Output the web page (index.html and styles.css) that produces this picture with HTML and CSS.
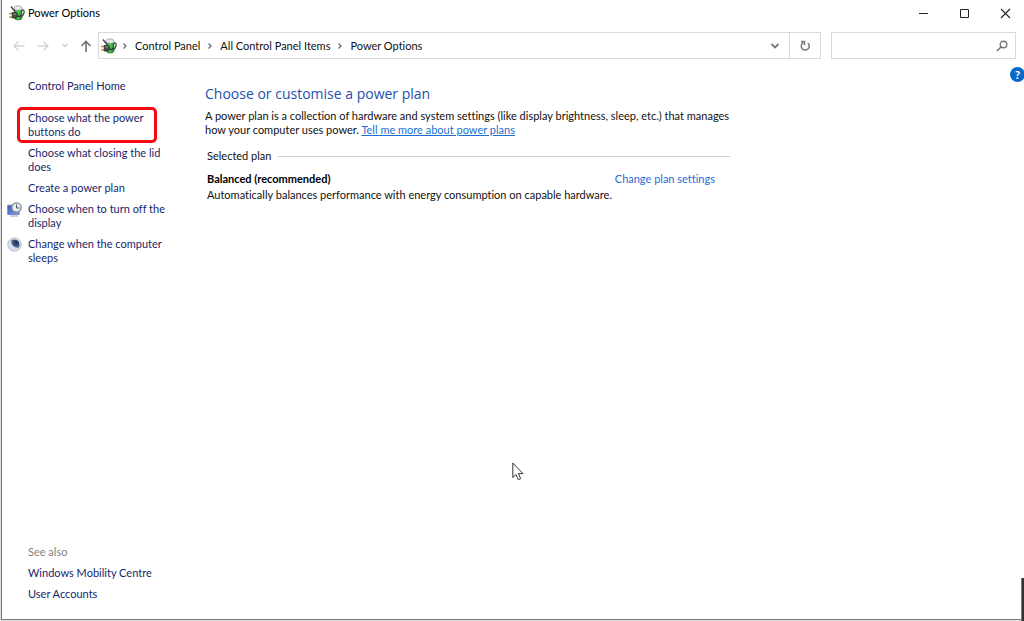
FILE: index.html
```html
<!DOCTYPE html>
<html lang="en-GB">
<head>
<meta charset="utf-8">
<title>Power Options</title>
<link rel="stylesheet" href="styles.css">
</head>
<body>
<svg class="defs" width="0" height="0" aria-hidden="true">
  <defs>
    <linearGradient id="green" x1="0" y1="0" x2="1" y2="0">
      <stop offset="0" stop-color="#1d7a25"/><stop offset="0.5" stop-color="#4fd04f"/><stop offset="1" stop-color="#17802a"/>
    </linearGradient>
    <linearGradient id="blue" x1="0" y1="0" x2="1" y2="1">
      <stop offset="0" stop-color="#3a50b8"/><stop offset="1" stop-color="#86a4ee"/>
    </linearGradient>
    <radialGradient id="moon" cx="0.65" cy="0.35" r="0.7">
      <stop offset="0" stop-color="#1c2c4c"/><stop offset="0.6" stop-color="#40567e"/><stop offset="1" stop-color="#8fa9cc"/>
    </radialGradient>
    <symbol id="power" viewBox="0 0 16 16">
      <path d="M12.500 5.500C15 4.200 15.600 6 14.800 8.500S13.500 11 12 12" fill="none" stroke="#3c443c" stroke-width="1.200"/>
      <path d="M5.500 3.500h7.500V13q-.3 2-3.700 2t-3.800-2z" fill="url(#green)" stroke="#24562a" stroke-width=".6"/>
      <path d="M5 4.500V3Q5.300.8 9 .8t4 2.200v1.500Q9 6.500 5 4.500z" fill="#e3eaed" stroke="#8b9695" stroke-width=".7"/>
      <path d="M2 1.500L5.500 6" stroke="#3d4343" stroke-width="1.300"/>
      <path d="M0 8.500h4M0 12h4" stroke="#c99a2c" stroke-width="1.400"/>
      <path d="M3.200 7.500H6.500q2 .5 2.500 2.500-.5 2.500-2.500 3H3.200z" fill="#4a4d4d" stroke="#1f2323" stroke-width=".7"/>
      <path d="M4.500 9h2.500" stroke="#9ba1a1"/>
      <path d="M9 11q2 1.500 3-1" fill="none" stroke="#242a26" stroke-width="1.200"/>
    </symbol>
    <symbol id="chevron" viewBox="0 0 6 8">
      <path d="M1.500 1.500L4 4 1.500 6.500" fill="none" stroke="#6a6a6a" stroke-width="1.300"/>
    </symbol>
  </defs>
</svg>
<div class="desktop">
  <div class="window">
    <header class="titlebar">
      <svg class="app-icon" aria-hidden="true"><use href="#power"/></svg>
      <span class="title">Power Options</span>
      <button class="caption" aria-label="Minimise"><svg width="11" height="11" viewBox="0 0 11 11"><path d="M1 5.500h9" stroke="#222"/></svg></button>
      <button class="caption" aria-label="Maximise"><svg width="11" height="11" viewBox="0 0 11 11"><path d="M1.500 1.500h8v8h-8z" fill="none" stroke="#222"/></svg></button>
      <button class="caption" aria-label="Close"><svg width="11" height="11" viewBox="0 0 11 11"><path d="M1 1l9 9M10 1l-9 9" stroke="#222" stroke-width="1.100"/></svg></button>
    </header>

    <div class="navbar">
      <div class="history">
        <button aria-label="Back"><svg width="12" height="12" viewBox="0 0 12 12"><path d="M11.500 6H1M5.500 1.500L1 6l4.500 4.500" fill="none" stroke="#d4d4d4" stroke-width="1.300"/></svg></button>
        <button aria-label="Forward"><svg width="12" height="12" viewBox="0 0 12 12"><path d="M.5 6H11M6.500 1.500L11 6l-4.500 4.500" fill="none" stroke="#d4d4d4" stroke-width="1.300"/></svg></button>
        <button aria-label="Recent locations"><svg width="6" height="12" viewBox="0 0 6 12"><path d="M.5 4L3 6.500 5.500 4" fill="none" stroke="#d0d0d0" stroke-width="1.300"/></svg></button>
        <button aria-label="Up"><svg width="12" height="12" viewBox="0 0 12 12"><path d="M6 12V1.500M1.500 6L6 1.500 10.500 6" fill="none" stroke="#707070" stroke-width="1.600"/></svg></button>
      </div>
      <nav class="address" aria-label="Address">
        <svg class="app-icon" aria-hidden="true"><use href="#power"/></svg>
        <svg class="chevron" aria-hidden="true"><use href="#chevron"/></svg>
        <a href="#">Control Panel</a>
        <svg class="chevron" aria-hidden="true"><use href="#chevron"/></svg>
        <a href="#">All Control Panel Items</a>
        <svg class="chevron" aria-hidden="true"><use href="#chevron"/></svg>
        <a href="#">Power Options</a>
        <button class="drop" aria-label="Previous locations"><svg width="10" height="8" viewBox="0 0 10 8"><path d="M1.500 2L5 5.500 8.500 2" fill="none" stroke="#777" stroke-width="1.800"/></svg></button>
        <button class="refresh" aria-label="Refresh"><svg width="12" height="12" viewBox="0 0 12 12"><path d="M8.800 3A4 4 0 1 1 4.500 2.500" fill="none" stroke="#777" stroke-width="1.500"/><path d="M2 1.500h3.500V5" fill="none" stroke="#777" stroke-width="1.400"/></svg></button>
      </nav>
      <label class="search">
        <input type="text" aria-label="Search Control Panel">
        <svg width="12" height="12" viewBox="0 0 12 12"><circle cx="7.500" cy="4.500" r="3.300" fill="none" stroke="#777" stroke-width="1.400"/><path d="M5 7L1 11" stroke="#777" stroke-width="1.700"/></svg>
      </label>
    </div>

    <div class="content">
      <aside class="sidebar">
        <a class="home" href="#">Control Panel Home</a>
        <ul class="tasks">
          <li><a class="marked" href="#">Choose what the power buttons do</a></li>
          <li><a href="#">Choose what closing the lid does</a></li>
          <li><a href="#">Create a power plan</a></li>
          <li>
            <svg class="task-icon" viewBox="0 0 15 15" aria-hidden="true">
              <path d="M.7 3.200h11.500v9.300H.7z" fill="url(#blue)" stroke="#6678bd" stroke-width=".8"/>
              <path d="M3 14h8" stroke="#a1a9bf"/>
              <circle cx="9.500" cy="5.500" r="4.700" fill="#e8eced" stroke="#7c878e" stroke-width="1.200"/>
              <path d="M9.500 2.500v3.500h3" fill="none" stroke="#4d5962"/>
            </svg>
            <a href="#">Choose when to turn off the display</a>
          </li>
          <li>
            <svg class="task-icon" viewBox="0 0 15 15" aria-hidden="true">
              <circle cx="7.500" cy="7.500" r="6.800" fill="#d4dfe9" stroke="#adbccb" stroke-width=".8"/>
              <path d="M4 3Q8 1.600 11 3.800 13.500 6.500 12 11 8.500 11.300 5.800 8.700 3.500 6 4 3z" fill="url(#moon)"/>
            </svg>
            <a href="#">Change when the computer sleeps</a>
          </li>
        </ul>
        <div class="see-also">
          <span>See also</span>
          <a href="#">Windows Mobility Centre</a>
          <a href="#">User Accounts</a>
        </div>
      </aside>

      <main class="main">
        <h1>Choose or customise a power plan</h1>
        <p class="intro">A power plan is a collection of hardware and system settings (like display brightness, sleep, etc.) that manages<br>how your computer uses power. <a href="#">Tell me more about power plans</a></p>
        <section class="plans">
          <h2>Selected plan</h2>
          <div class="plan">
            <strong>Balanced (recommended)</strong>
            <a href="#">Change plan settings</a>
          </div>
          <p>Automatically balances performance with energy consumption on capable hardware.</p>
        </section>
      </main>
      <button class="help" aria-label="Help">?</button>
    </div>
  </div>
  <div class="edge"></div>
  <svg class="pointer" width="12" height="19" viewBox="0 0 12 19" aria-hidden="true"><path d="M.8 1v14.500l3.200-3 2.300 5.200 2.400-1-2.300-5.100h4.500z" fill="#fff" stroke="#33333d"/></svg>
</div>
</body>
</html>
```

FILE: styles.css
```css
* { box-sizing: border-box; }

body {
  margin: 0;
  background: #fff;
  color: #111;
  font: 11px/14px Lato, "Open Sans", sans-serif;
  font-variant-ligatures: none;
}

a { color: inherit; text-decoration: none; }
h1, h2, p, ul { margin: 0; padding: 0; font-weight: 400; }

button {
  display: flex;
  align-items: center;
  justify-content: center;
  padding: 0;
  border: 0;
  background: none;
  font: inherit;
}

svg { flex: none; }
.defs { position: absolute; }

.desktop {
  position: relative;
  display: flex;
  min-height: 100vh;
  padding: 0 0 1px 1px;
  background: #dcdcdc;
}

.window {
  flex: 1;
  display: flex;
  flex-direction: column;
  border-left: 1px solid #777;
  border-bottom: 1px solid #777;
  background: #fff;
}

.titlebar {
  display: flex;
  align-items: center;
  height: 26px;
  padding-left: 7px;
}

.app-icon { width: 16px; height: 16px; }
.title { flex: 1; margin-left: 3px; color: #000; }
.caption { width: 41px; height: 26px; }
.caption:last-child { margin-right: -2px; }

.navbar {
  display: flex;
  align-items: center;
  height: 27px;
  margin-top: 6px;
  padding-right: 8px;
}

.history {
  display: flex;
  align-items: center;
  justify-content: space-between;
  width: 96px;
  padding: 0 6px 0 11px;
}

.address {
  flex: 1;
  display: flex;
  align-items: center;
  height: 27px;
  padding-left: 2px;
  border: 1px solid #d9d9d9;
}

.chevron { width: 6px; height: 8px; margin: 0 7px; }
.app-icon + .chevron { margin-left: 5px; }
.drop { width: 28px; height: 25px; margin-left: auto; }
.refresh { width: 31px; height: 25px; border-left: 1px solid #d9d9d9; }

.search {
  display: flex;
  align-items: center;
  width: 185px;
  height: 27px;
  margin-left: 10px;
  padding-right: 7px;
  border: 1px solid #d9d9d9;
}

.search input {
  flex: 1;
  min-width: 0;
  border: 0;
  outline: 0;
  font: inherit;
}

.content {
  flex: 1;
  position: relative;
  display: flex;
}

.sidebar {
  display: flex;
  flex-direction: column;
  width: 180px;
  padding: 20px 14px 18px 26px;
  color: #161f6a;
}

.tasks {
  display: flex;
  flex-direction: column;
  gap: 7px;
  margin-top: 18px;
  list-style: none;
}

.tasks li { position: relative; }
.tasks a { display: block; }

.marked { position: relative; }

.marked::after {
  content: "";
  position: absolute;
  inset: -4px 11px -4px -11px;
  border: 3px solid #f50a10;
  border-radius: 5px;
}

.task-icon {
  position: absolute;
  top: 0;
  left: -21px;
  width: 15px;
  height: 15px;
}

.see-also {
  display: flex;
  flex-direction: column;
  gap: 7px;
  margin-top: auto;
}

.see-also span { color: #838383; }

.main { width: 548px; padding: 25px 0 0 23px; }

h1 {
  color: #1f4fae;
  font-family: "Open Sans", sans-serif;
  font-size: 14px;
  line-height: 20px;
}

.intro { margin-top: 5px; white-space: nowrap; }
.intro a { color: #1b6fd0; text-decoration: underline; }
.plans { margin-top: 12px; padding-left: 2px; }

h2 {
  display: flex;
  align-items: center;
  gap: 7px;
  font-size: 11px;
}

h2::after { content: ""; flex: 1; height: 1px; background: #cfcfcf; }

.plan {
  display: flex;
  justify-content: space-between;
  margin-top: 9px;
  padding-right: 15px;
}

.plan strong { color: #000; }
.plan a { color: #1b6fd0; }
.plans p { margin-top: 2px; white-space: nowrap; }

.help {
  position: absolute;
  top: 8px;
  right: -1px;
  width: 15px;
  height: 15px;
  border-radius: 50%;
  background: #0b68c6;
  color: #fff;
  font-size: 12px;
  font-weight: 700;
}

.edge {
  position: absolute;
  right: 0;
  bottom: 0;
  width: 3px;
  height: 43px;
  border-left: 1px solid #777;
  background: #333;
}

.pointer { position: absolute; top: 462px; left: 512px; }
```
